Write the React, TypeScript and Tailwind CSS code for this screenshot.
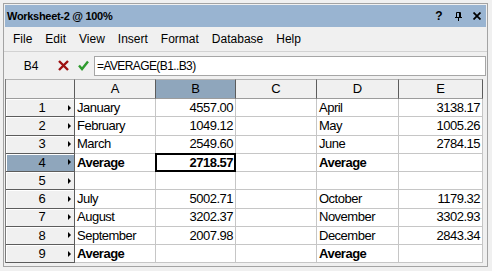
const rows = [
  { n: 1, a: "January", b: "4557.00", d: "April", e: "3138.17" },
  { n: 2, a: "February", b: "1049.12", d: "May", e: "1005.26" },
  { n: 3, a: "March", b: "2549.60", d: "June", e: "2784.15" },
  { n: 4, a: "Average", b: "2718.57", d: "Average", e: "", bold: true },
  { n: 5, a: "", b: "", d: "", e: "" },
  { n: 6, a: "July", b: "5002.71", d: "October", e: "1179.32" },
  { n: 7, a: "August", b: "3202.37", d: "November", e: "3302.93" },
  { n: 8, a: "September", b: "2007.98", d: "December", e: "2843.34" },
  { n: 9, a: "Average", b: "", d: "Average", e: "", bold: true },
];

const menus = ["File", "Edit", "View", "Insert", "Format", "Database", "Help"];
const cols = ["A", "B", "C", "D", "E"];

function RowHeader({ n, active }: { n: number; active: boolean }) {
  return (
    <div
      className={`flex items-center border-r border-b border-[#5c5c5c] shadow-[inset_1px_1px_0_#ffffff] ${
        active ? "bg-[#8fa6bc]" : "bg-[#f0f0f0]"
      }`}
    >
      <span className="flex-1 pl-[10px] text-center text-[13px]">{n}</span>
      {/* row pointer */}
      <svg width="3" height="6" viewBox="0 0 3 6" className="mr-[3px]">
        <path d="M0 0 L3 3 L0 6 Z" fill="#000" />
      </svg>
    </div>
  );
}

function DataCell({
  text,
  right,
  bold,
  selected,
}: {
  text: string;
  right?: boolean;
  bold?: boolean;
  selected?: boolean;
}) {
  return (
    <div
      className={`relative flex items-center border-r border-b border-[#c6c6c6] bg-white text-[13px] tracking-[-0.5px] ${
        right ? "justify-end pr-[2px]" : "pl-[2px]"
      } ${bold ? "font-bold" : ""}`}
    >
      {text}
      {selected && <div className="absolute -left-px -top-px -right-px -bottom-px border-2 border-black" />}
    </div>
  );
}

export default function App() {
  return (
    <div className="w-[492px] h-[271px] bg-[#f0f0f0] pt-[3px] pl-[3px] pr-[4px] pb-[4px] font-['Liberation_Sans',Arial,sans-serif] text-black overflow-hidden">
      <div className="h-full border border-[#a3a3a3] flex flex-col">
        {/* Title bar */}
        <div className="mx-[1px] mt-[1px] h-[22px] bg-[#99b4d1] flex items-center pl-[2px]">
          <span className="text-[11px] font-bold tracking-[-0.3px]">Worksheet-2 @ 100%</span>
          <div className="ml-auto flex items-center">
            <span className="w-[18px] text-center text-[12px] font-bold">?</span>
            <span className="w-[20px] flex justify-center">
              <svg width="7" height="9" viewBox="0 0 7 9">
                <path d="M1.5 0.5 H5.5 V5 M1.5 0.5 V5" stroke="#000" strokeWidth="1" fill="none" />
                <path d="M4.5 0.5 V5" stroke="#000" strokeWidth="1" />
                <path d="M0 5.5 H7" stroke="#000" strokeWidth="1" />
                <path d="M3.5 5.5 V9" stroke="#000" strokeWidth="1" />
              </svg>
            </span>
            <span className="w-[18px] flex justify-center">
              <svg width="8" height="8" viewBox="0 0 8 8">
                <path d="M0.5 0.5 L7.5 7.5 M7.5 0.5 L0.5 7.5" stroke="#000" strokeWidth="1.8" />
              </svg>
            </span>
          </div>
        </div>

        {/* Menu bar */}
        <div className="h-[25px] flex items-center gap-[13px] pl-[9px] text-[12px] border-b border-[#d2d2d2]">
          {menus.map((m) => (
            <span key={m}>{m}</span>
          ))}
        </div>

        {/* Formula bar */}
        <div className="h-[27px] flex items-center pr-[1px]">
          <span className="w-[54px] text-center text-[12px]">B4</span>
          <svg width="11" height="11" viewBox="0 0 11 11">
            <path d="M1 1 L10 10 M10 1 L1 10" stroke="#9e1010" strokeWidth="2.4" />
          </svg>
          <svg width="11" height="11" viewBox="0 0 11 11" className="ml-[9px]">
            <path d="M1 5.5 L4 9 L10 1.5" stroke="#2e9b2e" strokeWidth="2.4" fill="none" />
          </svg>
          <div className="ml-[5px] flex-1 h-[20px] bg-white border border-[#a6a6a6] flex items-center pl-[2px] text-[12px] tracking-[-0.6px]">
            =AVERAGE(B1..B3)
          </div>
        </div>

        {/* Grid */}
        <div className="ml-[1px] w-[478px] border-l border-[#7a7a7a] grid grid-cols-[69px_81px_80px_81px_82px_84px] grid-rows-[20px_repeat(9,18.25px)]">
          <div className="bg-[#f0f0f0] border-t border-[#b4b4b4] border-r border-r-[#5c5c5c] border-b border-b-[#9c9c9c]" />
          {cols.map((c) => (
            <div
              key={c}
              className={`flex items-center justify-center text-[13px] border-t border-[#b4b4b4] border-r border-r-[#5c5c5c] border-b border-b-[#9c9c9c] ${
                c === "B" ? "bg-[#8fa6bc]" : "bg-[#f0f0f0]"
              }`}
            >
              {c}
            </div>
          ))}
          {rows.map((r) => (
            <div key={r.n} className="contents">
              <RowHeader n={r.n} active={r.n === 4} />
              <DataCell text={r.a} bold={r.bold} />
              <DataCell text={r.b} right bold={r.bold} selected={r.n === 4} />
              <DataCell text="" />
              <DataCell text={r.d} bold={r.bold} />
              <DataCell text={r.e} right bold={r.bold} />
            </div>
          ))}
        </div>
      </div>
    </div>
  );
}
